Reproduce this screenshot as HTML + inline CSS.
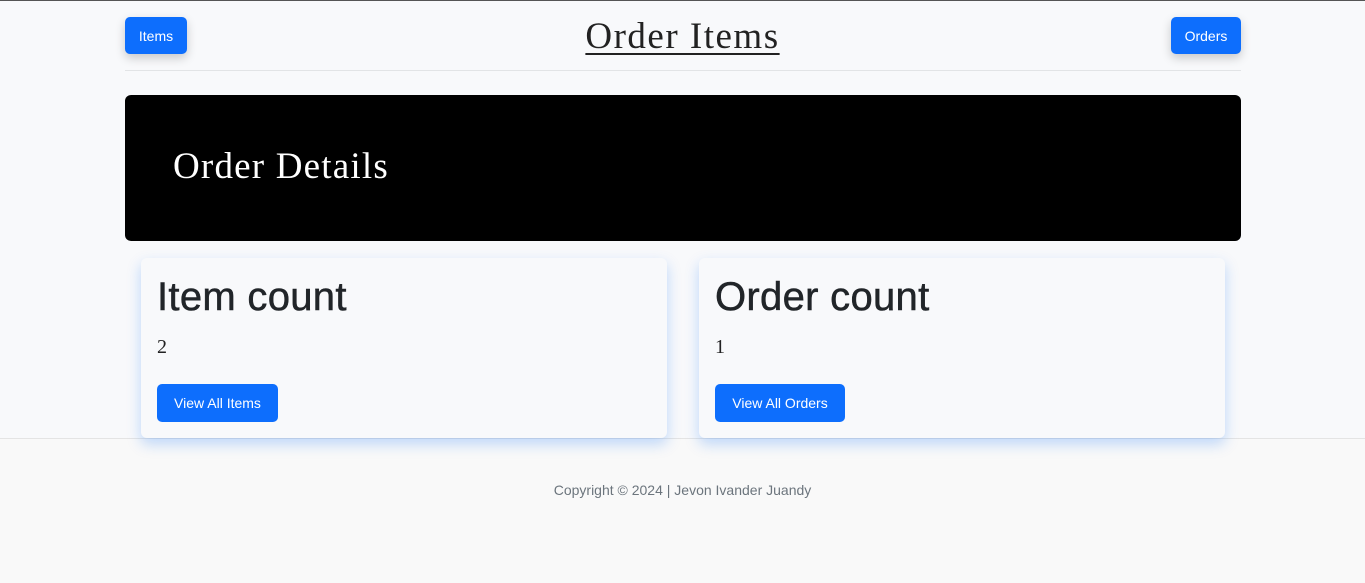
<!DOCTYPE html>
<html><head><style>
*{margin:0;padding:0;box-sizing:border-box}
body{width:1365px;height:583px;background:#f8f9fb;font-family:"Liberation Sans",sans-serif;position:relative;overflow:hidden}
.top{position:absolute;left:0;top:0;width:1365px;height:1px;background:#555}
.btn{position:absolute;background:#0d6efd;color:#fff;border-radius:5px;font-size:14px;display:flex;align-items:center;justify-content:center}
.sh{box-shadow:0 4px 10px rgba(0,0,0,.2)}
h1{position:absolute;left:0;width:1365px;top:15px;text-align:center;font:37px "Liberation Serif",serif;letter-spacing:1.5px;color:#222;text-decoration:underline;text-decoration-thickness:2px;text-underline-offset:5px}
.hr{position:absolute;left:125px;width:1116px;top:70px;border-top:1px solid #e2e4e6}
.jumbo{position:absolute;left:125px;top:95px;width:1116px;height:146px;background:#000;border-radius:6px}
.jumbo div{position:absolute;left:48px;top:50px;color:#fff;font:37px "Liberation Serif",serif;letter-spacing:1.2px}
.footer{position:absolute;left:0;top:438px;width:1365px;height:145px;background:#f9f9f9;border-top:1px solid #e4e4e4}
.footer p{text-align:center;margin-top:43px;font-size:14px;color:#6c757d}
.card{position:absolute;top:258px;width:526px;height:180px;background:#f8f9fb;border-radius:6px;box-shadow:0 6px 14px rgba(13,110,253,.25)}
.card h2{position:absolute;left:16px;top:17px;font-size:40px;font-weight:normal;color:#212529;letter-spacing:0.3px;-webkit-text-stroke:0.5px #212529}
.card .n{position:absolute;left:16px;top:78px;font:20px "Liberation Serif",serif;color:#222}
</style></head><body>
<div class="top"></div>
<div class="btn sh" style="left:125px;top:17px;width:62px;height:37px">Items</div>
<h1>Order Items</h1>
<div class="btn sh" style="left:1171px;top:17px;width:70px;height:37px">Orders</div>
<div class="hr"></div>
<div class="jumbo"><div>Order Details</div></div>
<div class="footer"><p>Copyright © 2024 | Jevon Ivander Juandy</p></div>
<div class="card" style="left:141px"><h2>Item count</h2><div class="n">2</div><div class="btn" style="left:16px;top:126px;width:121px;height:38px">View All Items</div></div>
<div class="card" style="left:699px"><h2>Order count</h2><div class="n">1</div><div class="btn" style="left:16px;top:126px;width:130px;height:38px">View All Orders</div></div>
</body></html>
